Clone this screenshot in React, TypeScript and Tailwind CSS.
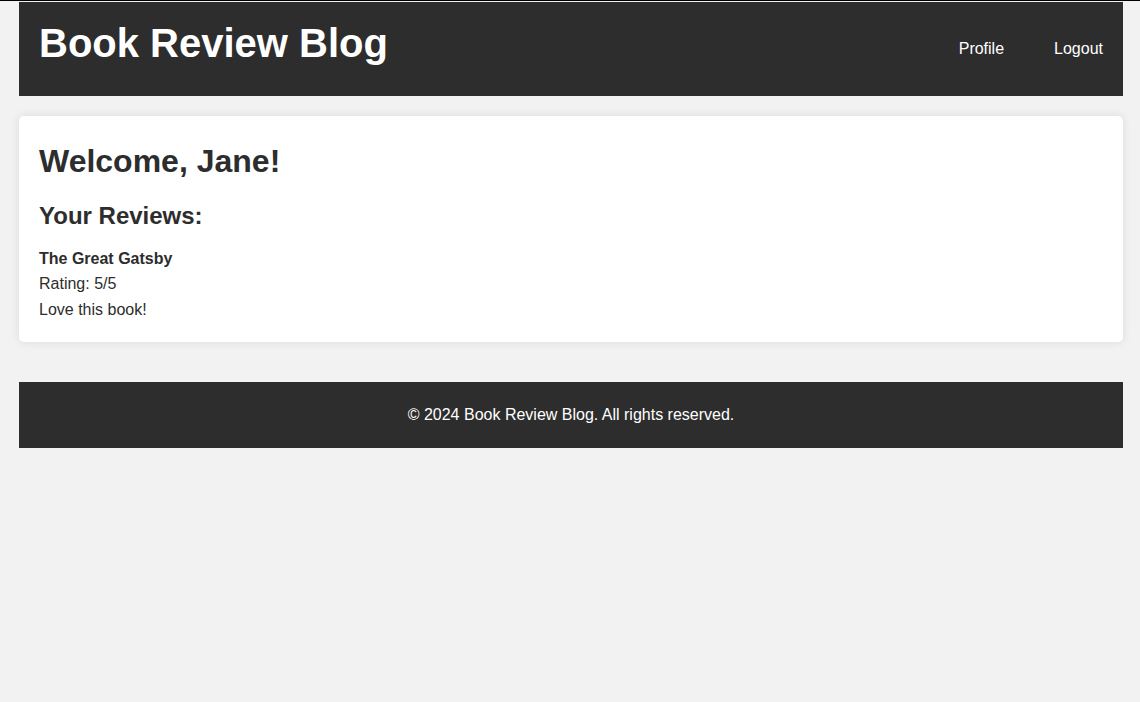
import React from "react";

const reviews = [
    { title: "The Great Gatsby", rating: 5, text: "Love this book!" },
];

const App: React.FC = () => {
    return (
        <div className="min-h-screen bg-[#f2f2f2] text-[#2d2d2d] font-['Liberation_Sans',Arial,sans-serif]">
            <div className="h-px bg-black" />
            <div className="pt-px pl-[19px] pr-[17px]">
                <header className="flex items-center justify-between bg-[#2d2d2d] px-5 pt-[18px] pb-[14px] text-white">
                    <h1 className="mb-4 text-[40px] font-bold leading-[46px]">Book Review Blog</h1>
                    <nav className="-mt-[4px] flex gap-[50px] text-base leading-[18px]">
                        <a href="#">Profile</a>
                        <a href="#">Logout</a>
                    </nav>
                </header>

                <main className="mt-5 rounded-[5px] bg-white p-5 leading-[1.6] shadow-[0_0_10px_rgba(0,0,0,0.1)]">
                    <h1 className="text-[32px] font-bold leading-[1.6]">Welcome, Jane!</h1>
                    <h2 className="mt-[10px] mb-[10px] text-2xl font-bold leading-[1.6]">Your Reviews:</h2>
                    {reviews.map((r) => (
                        <div key={r.title} className="text-[16px] leading-[25.6px]">
                            <div className="font-bold">{r.title}</div>
                            <div>Rating: {r.rating}/5</div>
                            <div>{r.text}</div>
                        </div>
                    ))}
                </main>

                <footer className="mt-10 bg-[#2d2d2d] py-5 text-center text-[16px] leading-[25.6px] text-white">
                    © 2024 Book Review Blog. All rights reserved.
                </footer>
            </div>
        </div>
    );
};

export default App;
